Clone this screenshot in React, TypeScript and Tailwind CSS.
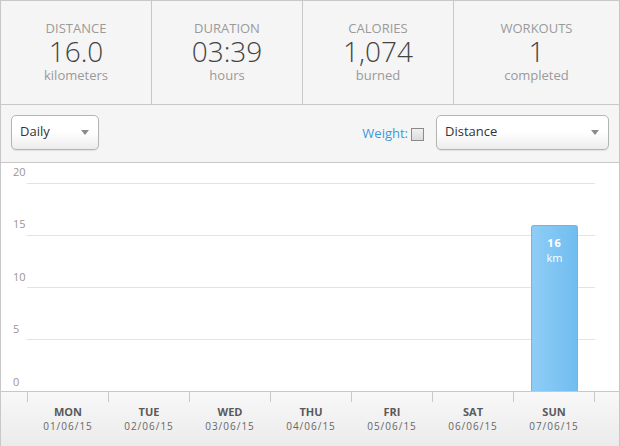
interface Stat {
  label: string;
  value: string;
  unit: string;
}

const stats: Stat[] = [
  { label: "Distance", value: "16.0", unit: "kilometers" },
  { label: "Duration", value: "03:39", unit: "hours" },
  { label: "Calories", value: "1,074", unit: "burned" },
  { label: "Workouts", value: "1", unit: "completed" },
];

const days = [
  { day: "MON", date: "01/06/15", km: 0 },
  { day: "TUE", date: "02/06/15", km: 0 },
  { day: "WED", date: "03/06/15", km: 0 },
  { day: "THU", date: "04/06/15", km: 0 },
  { day: "FRI", date: "05/06/15", km: 0 },
  { day: "SAT", date: "06/06/15", km: 0 },
  { day: "SUN", date: "07/06/15", km: 16 },
];

const MAX = 20;
const PLOT_H = 208;

function Arrow() {
  return (
    <svg width="8" height="5" viewBox="0 0 8 5" className="shrink-0">
      <path d="M0 0 H8 L4 5 Z" fill="#8a8a8a" />
    </svg>
  );
}

function FakeSelect({ label, width }: { label: string; width: string }) {
  return (
    <div
      className={`${width} h-[35px] flex items-center justify-between pl-[8px] pr-[9px] rounded-[5px] border border-[#b4b4b4] bg-gradient-to-b from-white via-white to-[#ececec] shadow-[0_1px_1px_rgba(0,0,0,0.08)] text-[13px] text-[#333] leading-none`}
    >
      <span className="-mt-[2px]">{label}</span>
      <Arrow />
    </div>
  );
}

export default function App() {
  return (
    <div className="w-[620px] h-[446px] overflow-hidden border-x border-t border-[#c8c8c8] bg-[#f5f5f5] font-['Open_Sans',sans-serif]">
      {/* stats */}
      <div className="grid grid-cols-[151px_151px_151px_1fr] h-[104px] border-b border-[#c8c8c8]">
        {stats.map((s, i) => (
          <div
            key={s.label}
            className={`flex flex-col items-center pt-[19px] ${i < 3 ? "border-r border-[#c8c8c8]" : ""}`}
          >
            <div className="text-[13px] leading-[16px] uppercase text-[#9a9a9a]">{s.label}</div>
            <div className="mt-[1px] text-[28px] leading-[28px] font-light text-[#444]">{s.value}</div>
            <div className="mt-[2px] text-[13px] leading-[16px] text-[#9a9a9a]">{s.unit}</div>
          </div>
        ))}
      </div>

      {/* controls */}
      <div className="h-[58px] flex items-start justify-between px-[10px] pt-[10px] border-b border-[#c8c8c8]">
        <FakeSelect label="Daily" width="w-[88px]" />
        <div className="flex items-center">
          <span className="text-[13px] text-[#3a9ad9] mt-[3px]">Weight:</span>
          <span className="ml-[3px] mt-[3px] w-[13px] h-[13px] border border-[#8a8a8a] bg-gradient-to-b from-[#f0f0f0] to-[#dcdcdc]" />
          <div className="ml-[12px]">
            <FakeSelect label="Distance" width="w-[173px]" />
          </div>
        </div>
      </div>

      {/* chart */}
      <div className="flex h-[229px] bg-white border-b border-[#c8c8c8]">
        <div className="w-[26px] pl-[12px] pt-[2px] flex flex-col text-[11px] leading-[14px] text-[#9a9690]">
          {[20, 15, 10, 5, 0].map((v) => (
            <div key={v} className="h-[52.4px] shrink-0">{v}</div>
          ))}
        </div>
        <div className="w-[568px] pt-[20px] relative">
          <div className="flex flex-col h-[208px]">
            {[0, 1, 2, 3].map((r) => (
              <div key={r} className="h-[52px] shrink-0 border-t border-[#e3e3e3]" />
            ))}
          </div>
          <div className="absolute left-0 right-0 bottom-0 h-[208px] grid grid-cols-7 items-end">
            {days.map((d) => (
              <div key={d.day} className="flex justify-center items-end h-full">
                {d.km > 0 && (
                  <div
                    className="w-[47px] rounded-t-[3px] border border-b-0 border-[#74b3e2] bg-gradient-to-r from-[#8fcdf6] to-[#70bdf0] flex flex-col items-center pt-[9px] text-white text-[11px] leading-[15px]"
                    style={{ height: (d.km / MAX) * PLOT_H }}
                  >
                    <span className="font-bold tracking-[1px]">{d.km}</span>
                    <span>km</span>
                  </div>
                )}
              </div>
            ))}
          </div>
        </div>
      </div>

      {/* x axis */}
      <div className="flex h-[54px] bg-gradient-to-b from-[#f8f8f8] to-[#ebebeb]">
        <div className="w-[26px]" />
        <div className="w-[568px] grid grid-cols-7 border-l border-[#c8c8c8] h-[10px]">
          {days.map((d) => (
            <div key={d.day} className="relative border-r border-[#c8c8c8] h-[10px]">
              <div className="absolute top-[13px] left-0 right-0 flex flex-col items-center">
                <span className="text-[11px] leading-[14px] font-bold text-[#5a5a5a]">{d.day}</span>
                <span className="text-[10px] leading-[14px] tracking-[1px] text-[#666]">{d.date}</span>
              </div>
            </div>
          ))}
        </div>
      </div>
    </div>
  );
}
